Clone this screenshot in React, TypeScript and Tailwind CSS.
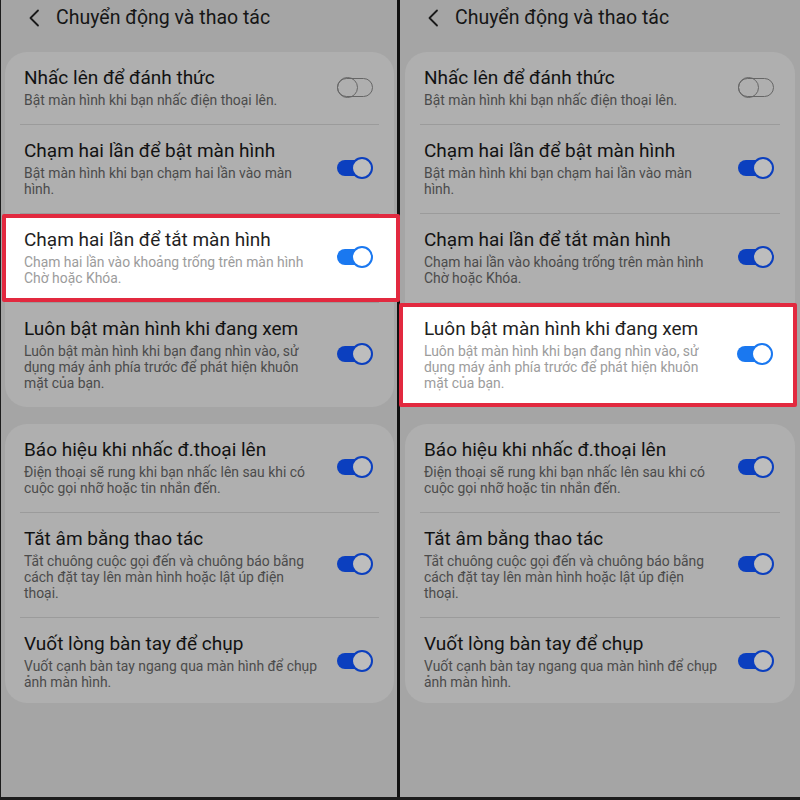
type Item = { title: string; lines: string[]; on: boolean }

const card1: Item[] = [
  { title: "Nhấc lên để đánh thức", lines: ["Bật màn hình khi bạn nhấc điện thoại lên."], on: false },
  {
    title: "Chạm hai lần để bật màn hình",
    lines: ["Bật màn hình khi bạn chạm hai lần vào màn", "hình."],
    on: true,
  },
  {
    title: "Chạm hai lần để tắt màn hình",
    lines: ["Chạm hai lần vào khoảng trống trên màn hình", "Chờ hoặc Khóa."],
    on: true,
  },
  {
    title: "Luôn bật màn hình khi đang xem",
    lines: ["Luôn bật màn hình khi bạn đang nhìn vào, sử", "dụng máy ảnh phía trước để phát hiện khuôn", "mặt của bạn."],
    on: true,
  },
]

const card2: Item[] = [
  {
    title: "Báo hiệu khi nhấc đ.thoại lên",
    lines: ["Điện thoại sẽ rung khi bạn nhấc lên sau khi có", "cuộc gọi nhỡ hoặc tin nhắn đến."],
    on: true,
  },
  {
    title: "Tắt âm bằng thao tác",
    lines: ["Tắt chuông cuộc gọi đến và chuông báo bằng", "cách đặt tay lên màn hình hoặc lật úp điện", "thoại."],
    on: true,
  },
  {
    title: "Vuốt lòng bàn tay để chụp",
    lines: ["Vuốt cạnh bàn tay ngang qua màn hình để chụp", "ảnh màn hình."],
    on: true,
  },
]

function Toggle({ on, bright }: { on: boolean; bright: boolean }) {
  if (!on) {
    return (
      <div className="relative w-[36px] h-[21px] shrink-0">
        <div className="absolute left-0 right-0 top-[1px] bottom-[1px] rounded-full border-[1.5px] border-[#666]" />
        <div className="absolute left-0 top-0 w-[21px] h-[21px] rounded-full border-[1.5px] border-[#666]" />
      </div>
    )
  }
  return (
    <div className="relative w-[36px] h-[22px] shrink-0">
      <div
        className={
          "absolute left-0 top-[3px] w-[30px] h-[16px] rounded-full " +
          (bright ? "bg-[#1a78f0]" : "bg-[#0b3fbf]")
        }
      />
      <div
        className={
          "absolute right-0 top-0 w-[22px] h-[22px] rounded-full border-2 " +
          (bright ? "border-[#1a78f0] bg-white" : "border-[#0b3fbf] bg-[#bdbdbd]")
        }
      />
    </div>
  )
}

function Row({ item, hl, hlClass, short }: { item: Item; hl: boolean; hlClass: string; short: boolean }) {
  return (
    <div
      className={
        "flex items-center " +
        (hl
          ? "relative z-10 bg-white border-4 border-[#e2293f] rounded-[2px] pt-[10px] pb-[12px] " + hlClass
          : "pl-[19px] pr-[21px] pt-[14px] " + (short ? "pb-[13px]" : "pb-[16px]"))
      }
    >
      <div className="flex-1">
        <div className={"text-[19px] leading-[24px] " + (hl ? "text-[#1f1f1f]" : "text-[#121212]")}>
          {item.title}
        </div>
        <div className={"mt-[2px] text-[13.9px] leading-[16px] " + (hl ? "text-[#9c9c9c]" : "text-[#4b4b4b]")}>
          {item.lines.map((l) => (
            <div key={l}>{l}</div>
          ))}
        </div>
      </div>
      <Toggle on={item.on} bright={hl} />
    </div>
  )
}

function Card({
  items,
  hlTitle,
  hlClass,
  cardClass,
  shortLast,
}: {
  items: Item[]
  hlTitle: string
  hlClass: string
  cardClass: string
  shortLast?: boolean
}) {
  return (
    <div className={"bg-[#afafaf] rounded-[22px] " + cardClass}>
      {items.map((it, i) => (
        <div key={it.title}>
          {i > 0 && <div className="mx-[15px] h-px bg-[#9b9b9b]" />}
          <Row
            item={it}
            hl={it.title === hlTitle}
            hlClass={hlClass}
            short={!!shortLast && i === items.length - 1}
          />
        </div>
      ))}
    </div>
  )
}

function Panel({ hlTitle, hlClass, cardClass, className }: { hlTitle: string; hlClass: string; cardClass: string; className: string }) {
  return (
    <div className={"h-full bg-[#a5a5a5] " + className}>
      <div className="flex items-center h-[36px] text-[#161616]">
        <svg className="ml-[27px] w-[12px] h-[18px]" viewBox="0 0 12 18" fill="none">
          <path d="M10 1.5 L2.5 9 L10 16.5" stroke="#1a1a1a" strokeWidth="1.8" strokeLinecap="round" strokeLinejoin="round" />
        </svg>
        <span className="ml-[16px] text-[19.5px]">Chuyển động và thao tác</span>
      </div>
      <Card items={card1} hlTitle={hlTitle} hlClass={hlClass} cardClass={"mt-[16px] " + cardClass} />
      <Card items={card2} hlTitle={hlTitle} hlClass={hlClass} cardClass={"mt-[17px] " + cardClass} shortLast />
    </div>
  )
}

export default function App() {
  return (
    <div
      className="flex w-[800px] h-[800px] overflow-hidden border-l border-b-[3px] border-[#1c1c1c]"
      style={{ fontFamily: "Roboto, 'Noto Sans', sans-serif" }}
    >
      <Panel
        className="w-[399px] border-r-[3px] border-[#111]"
        hlTitle="Chạm hai lần để tắt màn hình"
        hlClass="-ml-[3px] -mr-[6px] pl-[18px] pr-[23px]"
        cardClass="ml-[4px] mr-[3px]"
      />
      <Panel
        className="flex-1"
        hlTitle="Luôn bật màn hình khi đang xem"
        hlClass="-ml-[6px] -mr-[2px] pl-[21px] pr-[20px]"
        cardClass="ml-[5px] mr-[5px]"
      />
    </div>
  )
}
